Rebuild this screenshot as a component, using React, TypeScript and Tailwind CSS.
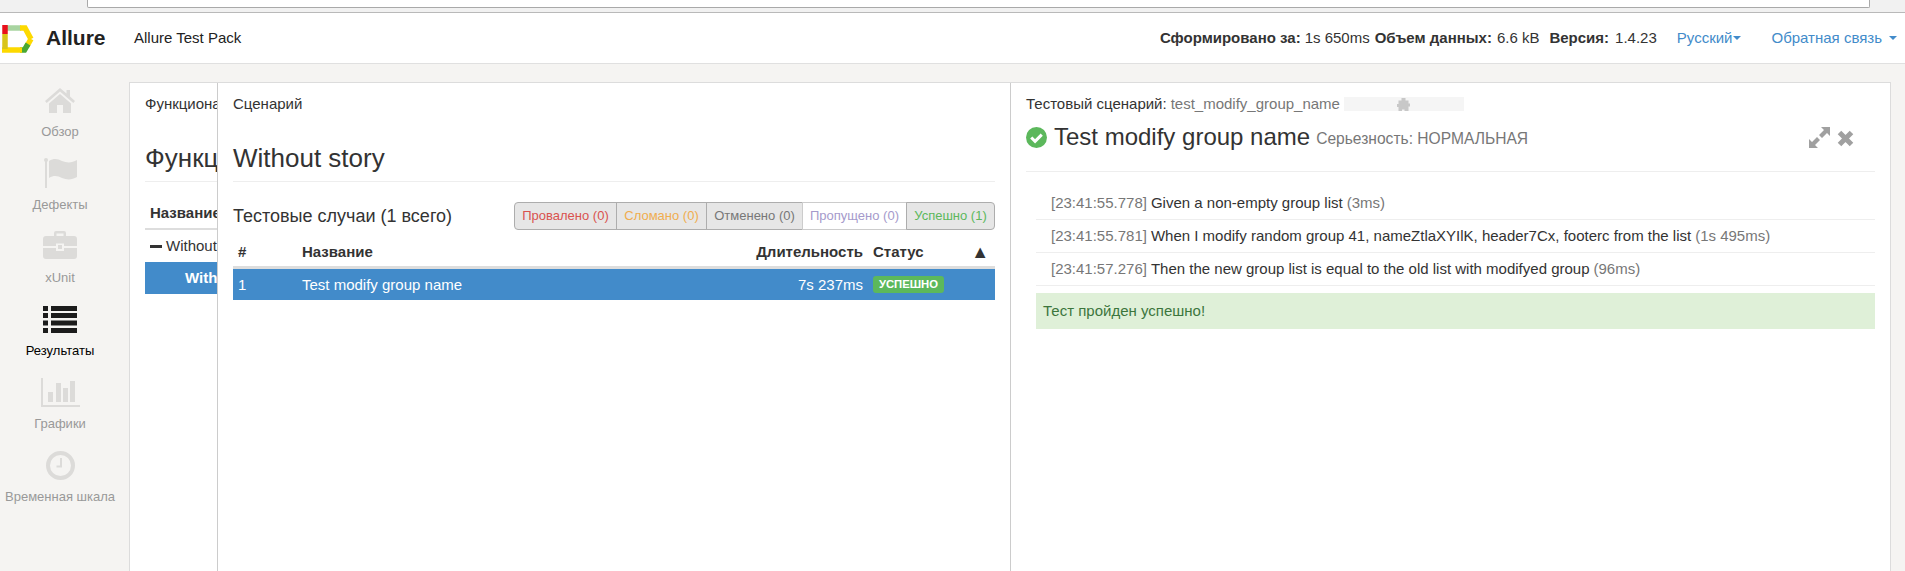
import React from "react";

const HomeIcon = () => (
  <svg width="30" height="25" viewBox="0 0 30 25" fill="#dcdbd9">
    <path d="M15 0 L21.5 5.6 V2 H25 V8.6 L30 13 L28.3 15 L15 3.6 L1.7 15 L0 13 Z" />
    <path d="M15 6 L26 15.4 V25 H18 V17 H12 V25 H4 V15.4 Z" />
  </svg>
);

const FlagIcon = () => (
  <svg width="33" height="30" viewBox="0 0 33 30" fill="#dcdbd9">
    <circle cx="2" cy="2" r="2" />
    <rect x="1" y="2" width="2" height="28" />
    <path d="M5 3 C10 0 14 1 18 3 C23 5 28 5 33 2 V19 C28 22 23 22 18 20 C14 18 10 17 5 20 Z" />
  </svg>
);

const BriefcaseIcon = () => (
  <svg width="34" height="28" viewBox="0 0 34 28" fill="#dcdbd9" className="-mt-[3px]">
    <path d="M11 5 V2 Q11 0 13 0 H21 Q23 0 23 2 V5 H20.5 V2.4 H13.5 V5 Z" />
    <path d="M3 5 H31 Q34 5 34 8 V15 H21 V12.5 H13 V15 H0 V8 Q0 5 3 5 Z" />
    <path d="M0 17 H13 V20 H21 V17 H34 V25 Q34 28 31 28 H3 Q0 28 0 25 Z" />
    <rect x="15" y="14" width="4" height="4" />
  </svg>
);

const ListIcon = () => (
  <svg width="34" height="27" viewBox="0 0 34 27" fill="#1c1c1c">
    <rect x="0" y="0" width="5" height="5" />
    <rect x="8" y="0" width="26" height="5" />
    <rect x="0" y="7" width="5" height="5" />
    <rect x="8" y="7" width="26" height="5" />
    <rect x="0" y="14.5" width="5" height="5" />
    <rect x="8" y="14.5" width="26" height="5" />
    <rect x="0" y="22" width="5" height="5" />
    <rect x="8" y="22" width="26" height="5" />
  </svg>
);

const ChartIcon = () => (
  <svg width="39" height="29" viewBox="0 0 39 29" fill="#dcdbd9">
    <rect x="0" y="0" width="2" height="29" />
    <rect x="0" y="27" width="39" height="2" />
    <rect x="7" y="14" width="5" height="10" />
    <rect x="15" y="5" width="5" height="19" />
    <rect x="22" y="10" width="5" height="14" />
    <rect x="29" y="3" width="5" height="21" />
  </svg>
);

const ClockIcon = () => (
  <svg width="29" height="29" viewBox="0 0 29 29">
    <circle cx="14.5" cy="14.5" r="12.5" fill="none" stroke="#dcdbd9" strokeWidth="4" />
    <path d="M16 7 V16.5 H10.5 V14.5 H14 V7 Z" fill="#dcdbd9" />
  </svg>
);

const Logo = () => (
  <svg width="34" height="28" viewBox="0 0 34 28" fill="none" strokeWidth="5.5">
    <path d="M4 3 H20" stroke="#a8d4a0" />
    <path d="M19 3 H24 L30 14" stroke="#fdd900" />
    <path d="M30 14 L26 21" stroke="#fdd900" />
    <path d="M27 19 L23.5 25 H19" stroke="#4aa832" />
    <path d="M21 25 H1" stroke="#fdd900" />
    <path d="M4 9 V24" stroke="#d9c51a" />
    <path d="M4 0 V9" stroke="#e8101c" />
  </svg>
);

const navItems = [
  { label: "Обзор", icon: <HomeIcon /> },
  { label: "Дефекты", icon: <FlagIcon /> },
  { label: "xUnit", icon: <BriefcaseIcon /> },
  { label: "Результаты", icon: <ListIcon />, active: true },
  { label: "Графики", icon: <ChartIcon /> },
  { label: "Временная шкала", icon: <ClockIcon /> },
];

const filters = [
  { label: "Провалено (0)", color: "text-[#d9534f]", w: "w-[103px]" },
  { label: "Сломано (0)", color: "text-[#f0ad4e]", w: "w-[91px]" },
  { label: "Отменено (0)", color: "text-[#777777]", w: "w-[97px]" },
  { label: "Пропущено (0)", color: "text-[#a59acb]", w: "w-[105px]", off: true },
  { label: "Успешно (1)", color: "text-[#5cb85c]", w: "w-[89px]" },
];

const steps = [
  { time: "[23:41:55.778]", text: "Given a non-empty group list", dur: "(3ms)" },
  {
    time: "[23:41:55.781]",
    text: "When I modify random group 41, nameZtlaXYIlK, header7Cx, footerc from the list",
    dur: "(1s 495ms)",
  },
  {
    time: "[23:41:57.276]",
    text: "Then the new group list is equal to the old list with modifyed group",
    dur: "(96ms)",
  },
];

const App = () => {
  return (
    <div className="flex flex-col w-[1905px] h-[571px] overflow-hidden bg-[#f5f4f2] text-[15px] leading-[20px] text-[#333333] font-['Liberation_Sans',Arial,sans-serif]">
      {/* browser chrome, cut off in the shot */}
      <div className="h-[13px] shrink-0 pl-[87px] pr-[35px] bg-[#f1f1f1] border-b border-[#b9b9b9]">
        <div className="h-[8px] bg-white border-x border-b border-[#a9a9a9] rounded-b-[2px]" />
      </div>

      {/* header */}
      <div className="flex items-center h-[51px] shrink-0 bg-white border-b border-[#e0e0e0]">
        <div className="ml-[1px] w-[45px] pt-[1px]">
          <Logo />
        </div>
        <span className="w-[88px] text-[21px] font-bold text-[#222222]">Allure</span>
        <span className="text-[#222222]">Allure Test Pack</span>
        <div className="flex items-center ml-auto pr-[8px]">
          <b>Сформировано за:</b>
          <span className="ml-[4px]">1s 650ms</span>
          <b className="ml-[5px]">Объем данных:</b>
          <span className="ml-[5px]">6.6 kB</span>
          <b className="ml-[10px]">Версия:</b>
          <span className="ml-[6px]">1.4.23</span>
          <span className="ml-[20px] text-[#428bca]">Русский</span>
          <span className="ml-[1px] border-x-[4px] border-t-[4px] border-x-transparent border-t-[#428bca]" />
          <span className="ml-[30px] text-[#428bca]">Обратная связь</span>
          <span className="ml-[7px] border-x-[4px] border-t-[4px] border-x-transparent border-t-[#428bca]" />
        </div>
      </div>

      {/* body */}
      <div className="flex flex-1 min-h-0">
        <div className="w-[129px] shrink-0 pt-[20px] pr-[9px] flex flex-col items-center text-[13px] leading-[17px] text-[#999999]">
          {navItems.map((item) => (
            <div key={item.label} className="flex flex-col items-center h-[73px] w-full">
              <div className="flex items-center justify-center h-[32px]">{item.icon}</div>
              <span className={item.active ? "mt-[7px] text-black" : "mt-[7px]"}>{item.label}</span>
            </div>
          ))}
        </div>

        <div className="flex flex-1 mt-[18px] mr-[14px] min-w-0 bg-white border-t border-x border-[#dcdcdc]">
          {/* first pane, mostly covered */}
          <div className="w-[87px] shrink-0 overflow-hidden pl-[15px] pt-[11px]">
            <div className="w-[500px] h-[20px]">Функциональность</div>
            <div className="w-[500px] h-[68px] pt-[30px] text-[26px] leading-[28px] border-b border-[#eeeeee]">
              Функциональность
            </div>
            <div className="w-[500px] h-[48px] pt-[21px] pl-[5px] font-bold border-b-[2px] border-[#dddddd]">
              Название
            </div>
            <div className="w-[500px] h-[32px] flex items-center">
              <span className="ml-[5px] mr-[4px] w-[12px] h-[3px] bg-[#333333]" />
              Without story
            </div>
            <div className="w-[500px] h-[32px] pl-[40px] flex items-center font-bold text-white bg-[#428bca]">
              Without story
            </div>
          </div>

          {/* scenario pane */}
          <div className="w-[793px] shrink-0 border-l border-[#cccccc] px-[15px] pt-[11px]">
            <div className="h-[20px]">Сценарий</div>
            <div className="h-[68px] pt-[30px] text-[26px] leading-[28px] border-b border-[#eeeeee]">Without story</div>
            <div className="flex items-center justify-between h-[48px] pt-[20px]">
              <span className="text-[18px]">Тестовые случаи (1 всего)</span>
              <div className="flex">
                {filters.map((f, i) => (
                  <div
                    key={f.label}
                    className={
                      "flex items-center justify-center h-[28px] text-[13px] border border-[#adadad] " +
                      f.color +
                      " " +
                      f.w +
                      (f.off ? " bg-white border-[#cccccc]" : " bg-[#e6e6e6]") +
                      (i === 0 ? " rounded-l-[4px]" : " -ml-[1px]") +
                      (i === filters.length - 1 ? " rounded-r-[4px]" : "")
                    }
                  >
                    {f.label}
                  </div>
                ))}
              </div>
            </div>
            <div className="flex items-center h-[39px] pt-[8px] font-bold border-b-[3px] border-[#dddddd]">
              <span className="w-[69px] pl-[5px]">#</span>
              <span className="flex-1">Название</span>
              <span className="w-[120px] text-right">Длительность</span>
              <span className="flex justify-between items-center w-[132px] pl-[10px] pr-[6px]">
                Статус
                <span className="font-normal text-[18px]">▲</span>
              </span>
            </div>
            <div className="flex items-center h-[31px] bg-[#428bca] text-white">
              <span className="w-[69px] pl-[5px]">1</span>
              <span className="flex-1">Test modify group name</span>
              <span className="w-[120px] text-right">7s 237ms</span>
              <span className="w-[132px] pl-[10px]">
                <span className="block w-[71px] h-[17px] rounded-[3px] bg-[#5cb85c] text-center text-[11.3px] leading-[17px] font-bold">
                  УСПЕШНО
                </span>
              </span>
            </div>
          </div>

          {/* test case pane */}
          <div className="flex-1 min-w-0 border-l border-[#cccccc] px-[15px] pt-[11px]">
            <div className="flex items-center h-[20px]">
              <span>Тестовый сценарий:</span>
              <span className="ml-[4px] text-[#777777]">test_modify_group_name</span>
              <div className="flex items-center justify-center ml-[4px] w-[120px] h-[14px] bg-[#f5f5f5]">
                <svg width="13" height="13" viewBox="0 0 13 13" fill="#c8c8c8">
                  <path d="M4.5 0 H8.5 V2.5 H11.5 V5.5 H13 V8.5 H11.5 V13 H7.5 V11.5 H5 V13 H1.5 V9 H0 V6 H1.5 V2.5 H4.5 Z" />
                </svg>
              </div>
            </div>
            <div className="flex items-center h-[58px] pb-[11px] border-b border-[#eeeeee]">
              <svg width="21" height="21" viewBox="0 0 22 22" className="mr-[7px]">
                <circle cx="11" cy="11" r="11" fill="#5cb85c" />
                <path d="M5.5 11 L9.5 15 L16.5 8" fill="none" stroke="white" strokeWidth="3.2" />
              </svg>
              <span className="text-[24px]">Test modify group name</span>
              <span className="ml-[6px] mt-[4px] text-[15.6px] text-[#777777]">Серьезность: НОРМАЛЬНАЯ</span>
              <div className="flex items-center ml-auto mr-[21px] gap-[7px]">
                <svg width="21" height="21" viewBox="0 0 21 21" fill="#a0a0a0">
                  <path d="M12 0 H21 V9 L18 6 L13 11 L10 8 L15 3 Z" />
                  <path d="M0 12 V21 H9 L6 18 L11 13 L8 10 L3 15 Z" />
                </svg>
                <svg width="17" height="17" viewBox="0 0 17 17" fill="none" stroke="#a0a0a0" strokeWidth="5" className="mt-[2px]">
                  <path d="M2.5 2.5 L14.5 14.5 M14.5 2.5 L2.5 14.5" />
                </svg>
              </div>
            </div>
            <div className="ml-[10px] mt-[15px]">
              {steps.map((s) => (
                <div key={s.time} className="flex items-center h-[33px] pl-[15px] gap-[4px] border-b border-[#eeeeee]">
                  <span className="text-[#777777]">{s.time}</span>
                  <span>{s.text}</span>
                  <span className="text-[#777777]">{s.dur}</span>
                </div>
              ))}
              <div className="flex items-center h-[36px] mt-[7px] pl-[7px] bg-[#dff0d8] text-[#3c763d]">
                Тест пройден успешно!
              </div>
            </div>
          </div>
        </div>
      </div>
    </div>
  );
};

export default App;
